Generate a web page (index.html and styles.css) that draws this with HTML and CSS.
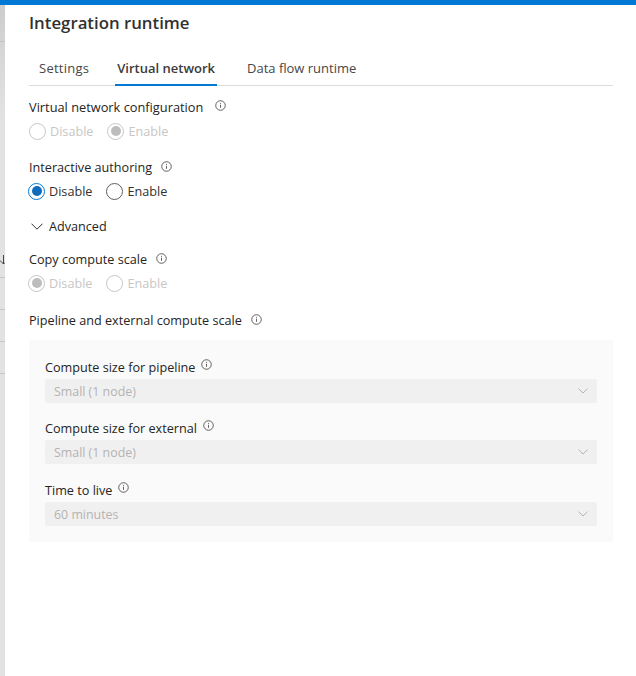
FILE: index.html
```html
<!DOCTYPE html>
<html lang="en">
<head>
<meta charset="UTF-8" />
<title>Integration runtime</title>
<link rel="stylesheet" href="styles.css">
</head>
<body>
<div class="backdrop">
  <div class="stub stub-a"></div>
  <svg class="stub-arrow" viewBox="0 0 5 10"><path d="M3.5 0v9M0 5.5l3.5 3.5L5 7.5"/></svg>
  <div class="stub stub-b"></div>
  <div class="stub stub-c"></div>
  <div class="stub stub-d"></div>
  <div class="stub stub-e"></div>
</div>
<div class="panel">
  <h1>Integration runtime</h1>

  <div class="tabs">
    <span class="tab tab-first">Settings</span>
    <span class="tab active">Virtual network</span>
    <span class="tab">Data flow runtime</span>
  </div>

  <div class="label lbl-vnet">Virtual network configuration
    <svg class="info info-wide" viewBox="0 0 12 12"><circle cx="6" cy="6" r="5.2"/><path d="M6 5.2v3.3M6 3.2v1"/></svg>
  </div>
  <div class="radios dim">
    <span class="radio"></span><span class="radio-text">Disable</span>
    <span class="radio on"></span><span class="radio-text">Enable</span>
  </div>

  <div class="label lbl-auth">Interactive authoring
    <svg class="info" viewBox="0 0 12 12"><circle cx="6" cy="6" r="5.2"/><path d="M6 5.2v3.3M6 3.2v1"/></svg>
  </div>
  <div class="radios outdent">
    <span class="radio on"></span><span class="radio-text">Disable</span>
    <span class="radio"></span><span class="radio-text">Enable</span>
  </div>

  <div class="advanced">
    <svg class="chev" viewBox="0 0 12 7"><path d="M.5.7 6 6.2 11.5.7"/></svg>
    Advanced
  </div>

  <div class="label lbl-copy">Copy compute scale
    <svg class="info" viewBox="0 0 12 12"><circle cx="6" cy="6" r="5.2"/><path d="M6 5.2v3.3M6 3.2v1"/></svg>
  </div>
  <div class="radios dim outdent">
    <span class="radio on"></span><span class="radio-text">Disable</span>
    <span class="radio"></span><span class="radio-text">Enable</span>
  </div>

  <div class="label lbl-pipe">Pipeline and external compute scale
    <svg class="info" viewBox="0 0 12 12"><circle cx="6" cy="6" r="5.2"/><path d="M6 5.2v3.3M6 3.2v1"/></svg>
  </div>

  <div class="scale-box">
    <div class="label field-label">Compute size for pipeline
      <svg class="info raised" viewBox="0 0 12 12"><circle cx="6" cy="6" r="5.2"/><path d="M6 5.2v3.3M6 3.2v1"/></svg>
    </div>
    <div class="select">Small (1 node)<svg class="chev-sm" viewBox="0 0 10 6"><path d="M.5.7 5 5 9.5.7"/></svg></div>

    <div class="label field-label">Compute size for external
      <svg class="info raised" viewBox="0 0 12 12"><circle cx="6" cy="6" r="5.2"/><path d="M6 5.2v3.3M6 3.2v1"/></svg>
    </div>
    <div class="select">Small (1 node)<svg class="chev-sm" viewBox="0 0 10 6"><path d="M.5.7 5 5 9.5.7"/></svg></div>

    <div class="label field-label field-last">Time to live
      <svg class="info raised" viewBox="0 0 12 12"><circle cx="6" cy="6" r="5.2"/><path d="M6 5.2v3.3M6 3.2v1"/></svg>
    </div>
    <div class="select">60 minutes<svg class="chev-sm" viewBox="0 0 10 6"><path d="M.5.7 5 5 9.5.7"/></svg></div>
  </div>
</div>
</body>
</html>
```

FILE: styles.css
```css
html, body {
  margin: 0;
  height: 100%;
  background: #fff;
  overflow: hidden;
}
body {
  display: flex;
  height: 676px;
  font-family: "Open Sans", "Noto Sans", sans-serif;
  font-size: 12.65px;
  color: #323130;
  border-top: 5px solid #0078d4;
  box-sizing: border-box;
}
.backdrop {
  width: 5px;
  flex: none;
  background: linear-gradient(#cdcdcd, #e2e2e2 110px);
  position: relative;
  overflow: hidden;
}
.stub {
  position: absolute;
  left: 0;
  width: 5px;
  height: 1px;
  background: #c6c6c6;
}
.stub-a { top: 36px; }
.stub-b { top: 272px; }
.stub-c { top: 304px; }
.stub-d { top: 336px; }
.stub-e { top: 368px; }
.stub-arrow {
  position: absolute;
  top: 250px;
  left: 0;
  width: 5px;
  height: 10px;
  fill: none;
  stroke: #444;
  stroke-width: 1;
}
.panel {
  flex: 1;
  padding: 0 23px 0 24px;
  min-width: 0;
}
h1 {
  margin: 6px 0 0;
  font-size: 16.8px;
  line-height: 24px;
  font-weight: 600;
  color: #323130;
}
.tabs {
  display: flex;
  margin-top: 17px;
  height: 33px;
  gap: 24px;
  border-bottom: 1px solid #dcdcdc;
  font-size: 13px;
}
.tab {
  padding: 0 2px;
  line-height: 32px;
  color: #484644;
}
.tab-first {
  margin-left: 8px;
  letter-spacing: 0.25px;
}
.tab.active {
  font-weight: 600;
  color: #3b3a39;
  border-bottom: 2px solid #0078d4;
  height: 32px;
  margin-right: 4px;
}
.label {
  display: flex;
  align-items: center;
  line-height: 18px;
  color: #252423;
}
.lbl-vnet {
  margin-top: 12px;
  font-size: 12.8px;
}
.lbl-auth { margin-top: 16px; }
.lbl-copy { margin-top: 15px; }
.lbl-pipe { margin-top: 17px; }
.info {
  width: 11px;
  height: 11px;
  margin: -1px 0 0 9px;
  fill: none;
  stroke: #57534f;
  stroke-width: 1;
}
.info-wide {
  margin: -4px 0 0 12px;
}
.info.raised { margin: -5px 0 0 6px; }
.radios {
  display: flex;
  align-items: center;
  margin-top: 4px;
  height: 22px;
}
.radios.outdent { margin-left: -1px; }
.radio {
  width: 15px;
  height: 15px;
  border: 1px solid #605e5c;
  border-radius: 50%;
  position: relative;
  margin-right: 4px;
}
.radio.on {
  border-color: #0078d4;
}
.radio.on::after {
  content: "";
  position: absolute;
  inset: 2.5px;
  border-radius: 50%;
  background: #0f6cbd;
}
.radio-text {
  margin-right: 14px;
}
.radios.dim .radio { border-color: #c8c6c4; }
.radios.dim .radio.on::after { background: #bdbdbd; }
.radios.dim .radio-text { color: #c8c6c4; }
.advanced {
  display: flex;
  align-items: center;
  margin-top: 15px;
  line-height: 18px;
  color: #252423;
}
.chev {
  width: 12px;
  height: 7px;
  margin: 0 6px 0 2px;
  fill: none;
  stroke: #323130;
  stroke-width: 1;
}
.scale-box {
  margin-top: 11px;
  background: #fafafa;
  padding: 18px 16px 16px;
}
.field-label {
  margin-top: 16px;
}
.field-label:first-child { margin-top: 0; }
.field-label.field-last { margin-top: 17px; }
.select {
  display: flex;
  align-items: center;
  justify-content: space-between;
  height: 24px;
  margin-top: 3px;
  padding: 0 9px;
  background: #f0f0f0;
  color: #b5b3b1;
  border-radius: 2px;
  font-size: 12.4px;
}
.chev-sm {
  width: 10px;
  height: 6px;
  fill: none;
  stroke: #b5b3b1;
  stroke-width: 1;
}
```
